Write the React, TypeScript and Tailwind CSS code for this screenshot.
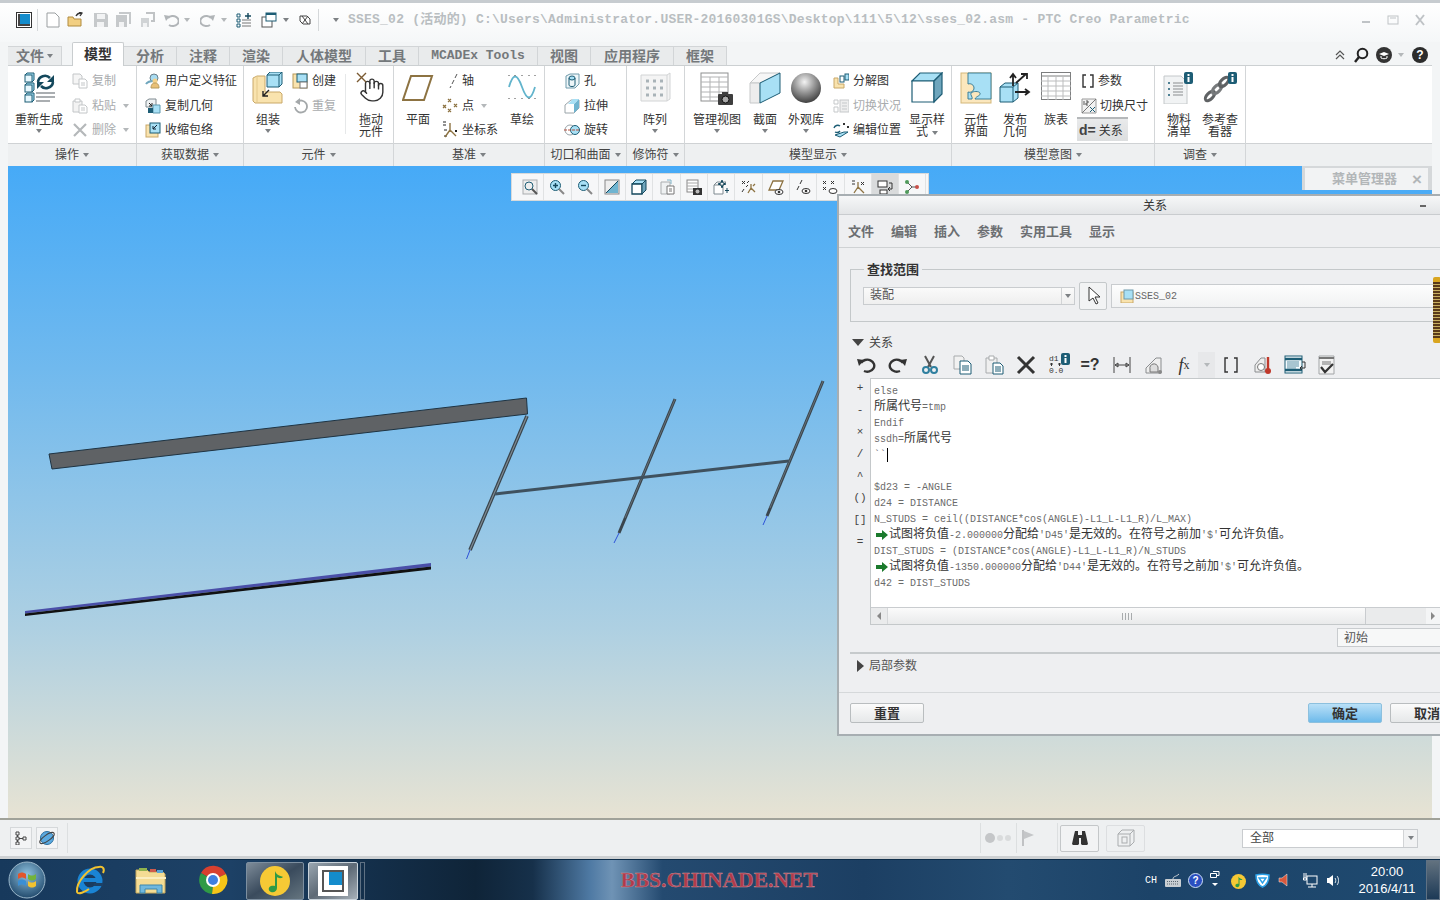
import React from "react";
import { Hand } from "lucide-react";

const CJK = "font-['Liberation_Sans','Noto_Sans_CJK_SC',sans-serif]";
const MONO = "font-['Liberation_Mono','Noto_Sans_CJK_SC',monospace]";

const Ico = ({ s = 16, h, children }: { s?: number; h?: number; children?: React.ReactNode }) => (
  <svg width={s} height={h ?? s} viewBox={`0 0 ${s} ${h ?? s}`} fill="none" className="block shrink-0">
    {children}
  </svg>
);

const Caret = ({ light }: { light?: boolean }) => (
  <span
    className={`inline-block w-0 h-0 border-l-[3.5px] border-r-[3.5px] border-t-[4px] border-l-transparent border-r-transparent ${
      light ? "border-t-[#b4b8ba]" : "border-t-[#7d8184]"
    }`}
  />
);

const Cube = ({ x, y, s = 8 }: { x: number; y: number; s?: number }) => (
  <g stroke="#1d5d75" strokeWidth="1">
    <path d={`M${x} ${y + 2}l2-2h${s - 2}v${s - 2}l-2 2z`} fill="#a8e0f5" />
    <rect x={x} y={y + 2} width={s - 2} height={s - 2} fill="#e7f7fd" />
  </g>
);

const InfoBadge = ({ x, y }: { x: number; y: number }) => (
  <g>
    <rect x={x} y={y} width="9" height="12" rx="2" fill="#1d5d75" />
    <rect x={x + 3.5} y={y + 2} width="2" height="2" fill="#fff" />
    <rect x={x + 3.5} y={y + 5} width="2" height="5" fill="#fff" />
  </g>
);

// big ribbon icons
const RegenIcon = () => (
  <Ico s={32}>
    <Cube x={2} y={1} s={9} />
    <Cube x={2} y={11} s={9} />
    <Cube x={2} y={21} s={9} />
    <path d="M15 10a7 7 0 0 1 12-4" stroke="#14485c" strokeWidth="2.6" />
    <path d="M31 3v7h-7z" fill="#14485c" />
    <path d="M30 10a7 7 0 0 1-12 4" stroke="#14485c" strokeWidth="2.6" />
    <path d="M14 17v-7h7z" fill="#14485c" />
    <path d="M13 21h19M13 25h19M13 29h14" stroke="#8f9498" strokeWidth="1.6" />
  </Ico>
);
const AsmIcon = () => (
  <Ico s={32}>
    <path d="M1 6l4-2h8v16h15l2 2v9H3l-2-2z" fill="#f9e3ae" stroke="#c9a868" />
    <path d="M5 4v26" stroke="#e3c88a" />
    <path d="M15 3l3-3h12v12l-3 3H15z" fill="#a8e0f5" stroke="#1d5d75" />
    <path d="M15 3h12v12M27 3l3-3" stroke="#1d5d75" />
    <path d="M17 18l-6 6m0-5v5h5" stroke="#222" strokeWidth="1.4" />
  </Ico>
);
const DragIcon = () => (
  <div className="relative w-[30px] h-[32px]">
    <div className="absolute left-[3px] top-[5px]">
      <Hand size={26} strokeWidth={1.3} color="#333" />
    </div>
    <div className="absolute left-0 top-0">
      <Ico s={12}>
        <path d="M1 1l9 9M10 1l-9 9" stroke="#7a5a32" strokeWidth="1.4" />
      </Ico>
    </div>
  </div>
);
const PlaneIcon = () => (
  <Ico s={32}>
    <path d="M9 4h21l-8 24H1z" stroke="#8d7342" strokeWidth="2" fill="#fff" />
  </Ico>
);
const SketchIcon = () => (
  <Ico s={30} h={30}>
    <path d="M2 15c4-14 8-14 13 0s9 14 13 0" stroke="#62b4cc" strokeWidth="1.8" />
    <path d="M2 3v1M8 3v1M15 3v1M22 3v1M28 3v1M2 26v1M8 26v1M15 26v1M22 26v1M28 26v1" stroke="#444" />
  </Ico>
);
const PatternIcon = () => (
  <Ico s={32}>
    <path d="M2 3h26l3-2v26l-3 2H2z" fill="#f4f4f4" stroke="#d2d4d5" />
    <path d="M28 3v26" stroke="#d2d4d5" />
    <path
      d="M7 9h3M14 9h3M21 9h3M7 16h3M14 16h3M21 16h3M7 23h3M14 23h3M21 23h3"
      stroke="#a9b3b8"
      strokeWidth="3"
    />
  </Ico>
);
const ViewMgrIcon = () => (
  <Ico s={34} h={34}>
    <rect x="1" y="1" width="27" height="28" fill="#fff" stroke="#8e8f90" />
    <path d="M1 5h27M1 10h27M1 15h27M1 20h27M1 25h27M10 5v24M19 5v24" stroke="#b2b3b4" />
    <rect x="18" y="22" width="15" height="11" rx="1" fill="#3e3e3e" />
    <rect x="22" y="20" width="6" height="3" fill="#3e3e3e" />
    <circle cx="25.5" cy="27.5" r="3.5" fill="#aaa" stroke="#111" />
  </Ico>
);
const SectionIcon = () => (
  <Ico s={32}>
    <path d="M1 11L11 1h20L11 11z" fill="#f6f6f6" stroke="#c6c8c9" />
    <path d="M1 11h10v20H1z" fill="#ededed" stroke="#c6c8c9" />
    <path d="M11 11L31 1v20L11 31z" fill="#a8e0f5" stroke="#1d5d75" />
  </Ico>
);
const SphereIcon = () => (
  <Ico s={32}>
    <defs>
      <radialGradient id="sph" cx="0.45" cy="0.3" r="0.75">
        <stop offset="0" stopColor="#f4f4f4" />
        <stop offset="0.45" stopColor="#9a9a9a" />
        <stop offset="1" stopColor="#333" />
      </radialGradient>
    </defs>
    <circle cx="16" cy="16" r="15" fill="url(#sph)" />
  </Ico>
);
const StyleIcon = () => (
  <Ico s={32}>
    <path d="M1 9l8-8h22L23 9z" fill="#a8e0f5" stroke="#1d5d75" strokeWidth="1.2" />
    <path d="M1 9h22v21H1z" fill="#fff" stroke="#1d5d75" strokeWidth="1.2" />
    <path d="M23 9l8-8v21l-8 8z" fill="#6fa6bd" stroke="#1d5d75" strokeWidth="1.2" />
  </Ico>
);
const CompIfaceIcon = () => (
  <Ico s={32}>
    <rect x="1" y="1" width="30" height="30" fill="#fbe7bd" stroke="#d3b77a" />
    <path
      d="M8 1h23v26H15c1-3 6-3 5-6-1-2-7-2-9 0-1 2 2 4 1 6H8v-7c3 1 6-1 6-4s-3-5-6-4z"
      fill="#a8e0f5"
      stroke="#3d7f97"
    />
  </Ico>
);
const PublishIcon = () => (
  <Ico s={32}>
    <path d="M1 15l5-4h13v15l-5 4H1z" fill="#a8e0f5" stroke="#1d5d75" />
    <path d="M14 15H1M14 15v15M14 15l5-4" stroke="#1d5d75" />
    <path d="M16 20h13M26 17l4 3-4 3M14 14V3M11 6l3-4 3 4M17 11l10-9M22 2h6v5" stroke="#222" strokeWidth="1.8" />
  </Ico>
);
const FamilyIcon = () => (
  <Ico s={30} h={28}>
    <rect x="0.5" y="0.5" width="29" height="27" fill="#fff" stroke="#7d7e7f" />
    <path d="M0 4h30" stroke="#7d7e7f" />
    <path d="M0 9h30M0 14h30M0 19h30M0 24h30M7 4v24M15 4v24M22 4v24" stroke="#bcbdbe" />
  </Ico>
);
const BomIcon = () => (
  <Ico s={32}>
    <path d="M1 4h17l6 6v22H1z" fill="#f1f3f4" stroke="#c4c8ca" />
    <path d="M5 11h2M5 17h2M5 23h2" stroke="#1d5d75" strokeWidth="1.6" />
    <path d="M10 11h10M10 14h10M10 17h10M10 20h10M10 23h10" stroke="#8a8d8f" />
    <InfoBadge x={21} y={0} />
  </Ico>
);
const RefIcon = () => (
  <Ico s={36} h={32}>
    <ellipse cx="8" cy="24" rx="6" ry="3" transform="rotate(-45 8 24)" stroke="#5f6264" strokeWidth="3" />
    <ellipse cx="15" cy="17" rx="6" ry="3" transform="rotate(-45 15 17)" stroke="#777a7c" strokeWidth="3" />
    <ellipse cx="22" cy="10" rx="6" ry="3" transform="rotate(-45 22 10)" stroke="#5f6264" strokeWidth="3" />
    <InfoBadge x={26} y={0} />
  </Ico>
);

// small ribbon icons
const CopyIcon = ({ c = "#c3c6c8", f = "#f5f5f5" }: { c?: string; f?: string }) => (
  <Ico>
    <path d="M1 1h7l2 2v8H1z" fill={f} stroke={c} />
    <path d="M7 6h6l2 2v7H7z" fill="#fff" stroke={c} />
    <path d="M9 10h4M9 12h4" stroke={c} />
  </Ico>
);
const PasteIcon = ({ c = "#c3c6c8" }: { c?: string }) => (
  <Ico>
    <path d="M1 3h9v11H1z" fill="#f3f3f3" stroke={c} />
    <path d="M3 1h5v3H3z" fill="#fff" stroke={c} />
    <path d="M7 7h6l2 2v6H7z" fill="#fff" stroke={c} />
    <path d="M9 10h4M9 12h4" stroke={c} />
  </Ico>
);
const XIcon = () => (
  <Ico>
    <path d="M2 2l12 12M14 2L2 14" stroke="#b5b8ba" strokeWidth="2.2" />
  </Ico>
);
const UdfIcon = () => (
  <Ico>
    <circle cx="9" cy="5" r="4" fill="#a8dcf2" stroke="#6b7f8a" />
    <path d="M1 11c2-3 5-3 8-3" stroke="#6fa6bd" strokeWidth="2" />
    <circle cx="10" cy="8" r="2.5" fill="#f4d28c" />
    <path d="M6 15c0-4 2-5 4-5s4 1 4 5z" fill="#e9c077" stroke="#b59a5c" />
  </Ico>
);
const CopyGeomIcon = () => (
  <Ico>
    <path d="M1 3l3-2h7v8H1z" fill="#eef1f2" stroke="#7e8a90" />
    <path d="M4 5l3 3m0-3v3H4" stroke="#222" />
    <path d="M8 7h7v8H8z" fill="#a8e0f5" stroke="#5d97ad" />
    <path d="M8 10h-5v5h5" fill="#1d5d75" />
  </Ico>
);
const ShrinkIcon = () => (
  <Ico>
    <rect x="1" y="3" width="12" height="12" fill="#f9e3ae" stroke="#c9a868" />
    <rect x="5" y="1" width="10" height="10" fill="#a8e0f5" stroke="#1d5d75" />
    <path d="M12 3L8 7m0-3v3h3" stroke="#123" />
  </Ico>
);
const CreateIcon = () => (
  <Ico>
    <rect x="1" y="1" width="14" height="14" fill="#f9e3ae" stroke="#b89a5a" />
    <rect x="5" y="1" width="10" height="8" fill="#a8e0f5" stroke="#1d5d75" />
    <rect x="8" y="9" width="7" height="6" fill="#fff" stroke="#777" />
  </Ico>
);
const RepeatIcon = () => (
  <Ico>
    <path d="M5 4a6 6 0 1 1-2 5" stroke="#a4a8aa" strokeWidth="1.8" />
    <path d="M8 0v7L3 4z" fill="#a4a8aa" />
  </Ico>
);
const AxisIcon = () => (
  <Ico>
    <path d="M15 1l-2 4M12 7l-2 4M9 13l-1 2" stroke="#555" />
  </Ico>
);
const PointIcon = () => (
  <Ico>
    <path
      d="M6 1l3 3M9 1L6 4M12 6l3 3M15 6l-3 3M1 7l3 3M4 7l-3 3M6 11l3 3M9 11l-3 3"
      stroke="#8d7342"
      strokeWidth="1.2"
    />
  </Ico>
);
const CsysIcon = () => (
  <Ico s={18}>
    <path d="M2 1h3M2 4h3M3 9h3M3 15h3" stroke="#222" />
    <path d="M9 2v9M9 9l-5 7M9 9l6 6" stroke="#8d7342" strokeWidth="1.4" />
    <path d="M14 9l2 2M16 9l-2 2" stroke="#222" />
  </Ico>
);
const HoleIcon = () => (
  <Ico>
    <path d="M2 3l4-2h9v10l-4 4H2z" fill="#eef6f9" stroke="#6f9aab" />
    <ellipse cx="8" cy="5" rx="3" ry="2" fill="#a8e0f5" stroke="#1d5d75" />
    <path d="M5 5v7c0 2 6 2 6 0V5" stroke="#1d5d75" />
  </Ico>
);
const ExtrudeIcon = () => (
  <Ico>
    <path d="M1 7l6-5h8v8l-5 5H1z" fill="#fff" stroke="#9aa4a9" />
    <path d="M10 6l5-5v9l-5 5z" fill="#6fb4d0" />
    <path d="M4 6l5-5h6l-5 5z" fill="#a8e0f5" />
  </Ico>
);
const RevolveIcon = () => (
  <Ico>
    <circle cx="6" cy="8" r="5" stroke="#9aa4a9" fill="#fff" />
    <circle cx="11" cy="8" r="4.5" fill="#a8e0f5" stroke="#1d5d75" />
    <path d="M0 8h16" stroke="#b2503f" strokeDasharray="3 1" />
  </Ico>
);
const ExplodeIcon = () => (
  <Ico>
    <path d="M1 5h4v6h6v4H1z" fill="#f9e3ae" stroke="#c9a868" />
    <rect x="7" y="3" width="4" height="6" fill="#fff" stroke="#1d5d75" />
    <rect x="12" y="1" width="4" height="6" fill="#a8e0f5" stroke="#1d5d75" />
  </Ico>
);
const ToggleStateIcon = () => (
  <Ico>
    <path d="M1 2h4v4H1zM1 9h4v5H1z" stroke="#c5c8ca" />
    <rect x="7" y="2" width="9" height="12" fill="#eee" stroke="#c5c8ca" />
    <path d="M9 5h5M9 8h5M9 11h5" stroke="#c5c8ca" />
  </Ico>
);
const EditPosIcon = () => (
  <Ico>
    <path d="M1 6a4 4 0 0 1 6-2M7 9a4 4 0 0 1-5 1" stroke="#1d5d75" strokeWidth="1.4" />
    <path d="M10 1l2 2M12 1l-2 2M14 4l2 2M16 4l-2 2" stroke="#333" />
    <path d="M2 13l9-3h4l-8 5z" fill="#a8e0f5" stroke="#1d5d75" />
  </Ico>
);
const BracesIcon = () => (
  <Ico s={14}>
    <path d="M5 1H2v12h3M9 1h3v12H9" stroke="#333" strokeWidth="1.4" />
  </Ico>
);
const SwitchDimIcon = () => (
  <Ico>
    <path d="M1 1h14v14H1z" fill="#f2f2f2" stroke="#9a9a9a" />
    <path d="M1 15L15 1" stroke="#777" />
    <path d="M3 3v4M5 3h2v2H5v2h2" stroke="#333" strokeWidth="0.8" />
    <path d="M9 9l5 5M14 9l-5 5" stroke="#1d5d75" />
  </Ico>
);

const Big = ({
  className = "",
  label,
  arrow,
  inlineArrow,
  children,
}: {
  className?: string;
  label: string[];
  arrow?: boolean;
  inlineArrow?: boolean;
  children: React.ReactNode;
}) => (
  <div className={`flex flex-col items-center shrink-0 ${className}`}>
    <div className="h-[48px] pt-[6px] flex justify-center">{children}</div>
    <div className="text-[12px] leading-[12px] text-center text-[#333] whitespace-nowrap">
      {label.map((l, i) => (
        <div key={l}>
          {l}
          {inlineArrow && i === label.length - 1 && (
            <span className="ml-[4px] align-middle inline-flex">
              <Caret />
            </span>
          )}
        </div>
      ))}
    </div>
    {arrow && (
      <div className="mt-[3px] flex">
        <Caret />
      </div>
    )}
  </div>
);

const Row = ({
  icon,
  label,
  off,
  arrow,
  pad = 4,
}: {
  icon: React.ReactNode;
  label: string;
  off?: boolean;
  arrow?: boolean;
  pad?: number;
}) => (
  <div className={`h-[24.5px] flex items-center whitespace-nowrap text-[12px] ${off ? "text-[#a9acae]" : "text-[#333]"}`}>
    {icon}
    <span className={pad === 3 ? "ml-[3px]" : "ml-[4px]"}>{label}</span>
    {arrow && (
      <span className="ml-[7px] flex">
        <Caret light />
      </span>
    )}
  </div>
);

const Group = ({
  w,
  label,
  arrow = true,
  children,
}: {
  w: string;
  label?: string;
  arrow?: boolean;
  children?: React.ReactNode;
}) => (
  <div className={`flex flex-col shrink-0 border-r border-[#d3d6d8] ${w}`}>
    <div className="h-[77px] flex">{children}</div>
    <div className="h-[23px] bg-[#eef0f1] border-t border-[#cfd2d4] flex items-center justify-center gap-[4px] text-[12px] text-[#444]">
      {label}
      {label && arrow && <Caret />}
    </div>
  </div>
);

const Tab = ({ w, children, mono }: { w: string; children: React.ReactNode; mono?: boolean }) => (
  <div
    className={`h-[19px] flex items-center justify-center bg-[#e9ebec] border-t border-r border-[#d2d5d7] font-bold text-[#74787b] ${
      mono ? `${MONO} text-[13px]` : "text-[14px]"
    } ${w}`}
  >
    {children}
  </div>
);

const Op = ({ children }: { children: string }) => (
  <div className="h-[22px] flex items-center justify-center text-[11px] text-[#444]">{children}</div>
);

const Code = ({ text, arrow }: { text?: string; arrow?: boolean }) => (
  <div className="h-[16px] flex items-center whitespace-pre">
    {arrow && (
      <span className="mr-[1px] ml-[2px]">
        <Ico s={12}>
          <path d="M0 4h6V1l6 5-6 5V8H0z" fill="#1b7a2c" />
        </Ico>
      </span>
    )}
    {(text ?? "").split(/([\u4e00-\u9fff\u3000-\u303f]+)/).map((t, i) =>
      i % 2 ? (
        <span key={i} className="text-[12px] text-[#333]">
          {t}
        </span>
      ) : (
        <span key={i} className="text-[10px] text-[#6b6b6b]">
          {t}
        </span>
      ),
    )}
  </div>
);

const Tool = ({ active, children }: { active?: boolean; children: React.ReactNode }) => (
  <div
    className={`w-[27.3px] h-full flex items-center justify-center border-r border-[#e0e2e3] ${
      active ? "bg-[#d9dbdc]" : ""
    }`}
  >
    {children}
  </div>
);

const Btn = ({ w, blue, children }: { w: string; blue?: boolean; children: string }) => (
  <div
    className={`h-[20px] pt-[1px] flex items-center justify-center rounded-[2px] border text-[13px] font-bold text-[#333] ${w} ${
      blue
        ? "border-[#8cc0de] bg-gradient-to-b from-[#b9e0f7] to-[#6dbaea]"
        : "border-[#b9bdbf] bg-gradient-to-b from-[#fbfbfb] to-[#e6e8e9]"
    }`}
  >
    {children}
  </div>
);

const Sep = ({ className }: { className: string }) => <div className={`w-px h-[30px] bg-[#dcdfe0] ${className}`} />;

const Dialog = () => (
  <div className="absolute left-[837px] top-[194px] w-[636px] h-[542px] flex flex-col border-2 border-[#a7aeb2] bg-[#eeeff1]">
    <div className="h-[19px] pt-[1px] relative shrink-0 flex items-center justify-center text-[12px] text-[#333] bg-gradient-to-b from-[#f6f7f8] to-[#e3e5e7] border-b border-[#c9cccf]">
      关系
      <div className="absolute left-[581px] top-[9px] w-[6px] h-[2px] bg-[#666]" />
    </div>
    <div className="h-[33px] pt-[2px] shrink-0 flex items-center gap-[17px] pl-[9px] text-[13px] font-bold text-[#6b6e71] border-b border-[#cfd2d4]">
      <span>文件</span>
      <span>编辑</span>
      <span>插入</span>
      <span>参数</span>
      <span>实用工具</span>
      <span>显示</span>
    </div>

    <fieldset className="mx-[11px] mt-[13px] h-[61px] shrink-0 border border-[#c4c8ca] px-[12px]">
      <legend className="ml-[1px] px-[3px] h-[16px] leading-[17px] text-[13px] font-bold text-[#333]">查找范围</legend>
      <div className="mt-[5px] h-[28px] flex items-center">
        <div className="w-[212px] h-[18px] flex border border-[#c9cccf] bg-gradient-to-b from-[#fafafa] to-[#efefef]">
          <span className="flex-1 pl-[6px] text-[12px] leading-[15px] text-[#555]">装配</span>
          <span className="w-[13px] border-l border-[#d2d4d6] flex items-center justify-center">
            <Caret />
          </span>
        </div>
        <div className="ml-[4px] w-[28px] h-[28px] flex items-center justify-center rounded-[2px] border border-[#c4c8ca] bg-[#f2f3f4]">
          <Ico s={20}>
            <path d="M6 1v14l4-3 3 6 2-1-3-6h5z" fill="#fff" stroke="#333" />
          </Ico>
        </div>
        <div className="ml-[4px] flex-1 h-[24px] flex items-center pl-[8px] border border-[#c9cccf] bg-gradient-to-b from-[#fdfdfd] to-[#f1f2f3] text-[10px] text-[#666]">
          <Ico s={14}>
            <rect x="1" y="3" width="12" height="11" fill="#f9e3ae" stroke="#c9a868" />
            <rect x="4" y="1" width="9" height="9" fill="#a8e0f5" stroke="#6f9aab" />
          </Ico>
          <span className={`${MONO} ml-[1px]`}>SSES_02</span>
        </div>
      </div>
    </fieldset>

    <div className="mt-[12px] h-[16px] pt-[1px] shrink-0 flex items-center pl-[13px] text-[12px] text-[#444]">
      <span className="w-0 h-0 border-l-[6px] border-r-[6px] border-t-[7px] border-l-transparent border-r-transparent border-t-[#444]" />
      <span className="ml-[5px]">关系</span>
    </div>

    <div className="mt-[4px] h-[22px] shrink-0 ml-[11px] flex items-center">
      <div className="w-[32px] flex justify-center">
        <Ico s={20}>
          <path d="M5 8a7 6 0 1 1 3 8" stroke="#333" strokeWidth="2.4" />
          <path d="M1 4l7 1-5 6z" fill="#333" />
        </Ico>
      </div>
      <div className="w-[32px] flex justify-center">
        <Ico s={20}>
          <path d="M15 8a7 6 0 1 0-3 8" stroke="#333" strokeWidth="2.4" />
          <path d="M19 4l-7 1 5 6z" fill="#333" />
        </Ico>
      </div>
      <div className="w-[32px] flex justify-center">
        <Ico s={20}>
          <path d="M5 1l6 11M14 1L8 12" stroke="#555" strokeWidth="2" />
          <circle cx="6" cy="15" r="3" stroke="#2f7f9f" strokeWidth="2" />
          <circle cx="14" cy="15" r="3" stroke="#2f7f9f" strokeWidth="2" />
        </Ico>
      </div>
      <div className="w-[32px] flex justify-center">
        <Ico s={20}>
          <path d="M2 1h8l2 2v11H2z" fill="#f1f1f1" stroke="#a8abad" />
          <path d="M8 6h8l3 3v10H8z" fill="#fff" stroke="#1d5d75" />
          <path d="M10 11h7M10 13h7M10 15h7" stroke="#1d5d75" />
        </Ico>
      </div>
      <div className="w-[32px] flex justify-center">
        <Ico s={20}>
          <path d="M2 3h11v15H2z" fill="#efefef" stroke="#a8abad" />
          <path d="M5 1h5v4H5z" fill="#fff" stroke="#a8abad" />
          <path d="M9 8h7l3 3v8H9z" fill="#fff" stroke="#1d5d75" />
          <path d="M11 12h6M11 14h6M11 16h6" stroke="#1d5d75" />
        </Ico>
      </div>
      <div className="w-[32px] flex justify-center">
        <Ico s={20}>
          <path d="M2 2l16 16M18 2L2 18" stroke="#333" strokeWidth="3" />
        </Ico>
      </div>
      <div className="w-[32px] flex justify-center">
        <Ico s={23} h={24}>
          <text x="2" y="8" fontSize="8" fill="#333" fontFamily="Liberation Mono">d1</text>
          <path d="M3 11h3M11 11h3M4.5 10v3M12.5 10v3" stroke="#333" />
          <text x="2" y="20" fontSize="8" fill="#333" fontFamily="Liberation Mono">0.0</text>
          <InfoBadge x={14} y={0} />
        </Ico>
      </div>
      <div className="w-[32px] flex justify-center text-[16px] font-bold text-[#333]">=?</div>
      <div className="w-[32px] flex justify-center">
        <Ico s={20}>
          <path d="M2 2v16M18 2v16M3 10h14M3 10l3-2v4zM17 10l-3-2v4z" stroke="#444" />
        </Ico>
      </div>
      <div className="w-[32px] flex justify-center">
        <Ico s={20}>
          <path d="M2 18h15V3h-5L2 13z" fill="#eee" stroke="#8a8d8f" />
          <path d="M6 14a4 4 0 0 1 8-2v5H6z" fill="#ddd" stroke="#777" />
          <circle cx="16" cy="17" r="2" fill="#888" />
        </Ico>
      </div>
      <div className="w-[28px] flex justify-center font-['Liberation_Serif',serif] italic text-[18px] text-[#333] leading-[22px]">
        f<span className="text-[12px] not-italic">x</span>
      </div>
      <div className="w-[17px] h-[26px] -my-[2px] flex items-center justify-center bg-[#e7e8ea]">
        <Caret light />
      </div>
      <div className="w-[32px] flex justify-center">
        <Ico s={16}>
          <path d="M5 1H2v14h3M11 1h3v14h-3" stroke="#333" strokeWidth="1.4" />
        </Ico>
      </div>
      <div className="w-[32px] flex justify-center">
        <Ico s={20}>
          <path d="M2 17h10V3H8L2 10z" fill="#eee" stroke="#8a8d8f" />
          <circle cx="8" cy="12" r="3.5" fill="#fff" stroke="#777" />
          <path d="M15 2v12" stroke="#c0392b" strokeWidth="2.4" />
          <circle cx="15" cy="16" r="3" fill="#c0392b" />
        </Ico>
      </div>
      <div className="w-[32px] flex justify-center">
        <Ico s={22}>
          <rect x="1" y="2" width="17" height="17" fill="#f4fbfe" stroke="#1d5d75" />
          <path d="M1 5h17M1 16h17" stroke="#1d5d75" strokeWidth="2.5" />
          <path d="M3 8h12M3 10h12M3 12h12M3 14h9" stroke="#5d8fa3" />
          <path d="M18 8h3v6h-5m2-2l-2 2 2 2" stroke="#333" />
        </Ico>
      </div>
      <div className="w-[32px] flex justify-center">
        <Ico s={20}>
          <path d="M2 1h15v18H2z" fill="#f2f2f2" stroke="#a2a5a7" />
          <path d="M2 3h15" stroke="#777" strokeWidth="2" />
          <path d="M5 7h9M5 9h9" stroke="#777" />
          <path d="M4 12l4 5 8-8" stroke="#333" strokeWidth="2.2" />
        </Ico>
      </div>
    </div>

    <div className="mt-[2px] ml-[11px] h-[247px] shrink-0 flex">
      <div className="w-[20px] -mt-[1px] font-['Liberation_Mono',monospace]">
        <Op>+</Op>
        <Op>-</Op>
        <Op>×</Op>
        <Op>/</Op>
        <Op>^</Op>
        <Op>()</Op>
        <Op>[]</Op>
        <Op>=</Op>
      </div>
      <div className="flex-1 flex flex-col border border-[#c4c8ca] bg-white">
        <div className={`flex-1 pt-[4px] pl-[3px] ${MONO}`}>
          <Code text="else" />
          <Code text="所属代号=tmp" />
          <Code text="Endif" />
          <Code text="ssdh=所属代号" />
          <div className="h-[16px] flex items-center text-[10px] text-[#6b6b6b]">
            ``
            <span className="ml-[1px] w-px h-[14px] bg-black" />
          </div>
          <Code />
          <Code text="$d23 = -ANGLE" />
          <Code text="d24 = DISTANCE" />
          <Code text="N_STUDS = ceil((DISTANCE*cos(ANGLE)-L1_L-L1_R)/L_MAX)" />
          <Code arrow text="试图将负值-2.000000分配给'D45'是无效的。在符号之前加'$'可允许负值。" />
          <Code text="DIST_STUDS = (DISTANCE*cos(ANGLE)-L1_L-L1_R)/N_STUDS" />
          <Code arrow text="试图将负值-1350.000000分配给'D44'是无效的。在符号之前加'$'可允许负值。" />
          <Code text="d42 = DIST_STUDS" />
        </div>
        <div className="h-[17px] shrink-0 flex bg-[#eaebec] border-t border-[#c9cccf]">
          <div className="w-[17px] flex items-center justify-center border-r border-[#d6d8da]">
            <span className="w-0 h-0 border-t-[4px] border-b-[4px] border-r-[4px] border-t-transparent border-b-transparent border-r-[#888]" />
          </div>
          <div className="w-[478px] flex items-center justify-center gap-[2px] border-r border-[#c9cccf] bg-gradient-to-b from-[#fbfbfb] to-[#e9eaeb]">
            <span className="w-px h-[7px] bg-[#a8abad]" />
            <span className="w-px h-[7px] bg-[#a8abad]" />
            <span className="w-px h-[7px] bg-[#a8abad]" />
            <span className="w-px h-[7px] bg-[#a8abad]" />
          </div>
          <div className="w-[60px]" />
          <div className="w-[14px] flex items-center justify-center bg-[#f4f5f6]">
            <span className="w-0 h-0 border-t-[4px] border-b-[4px] border-l-[4px] border-t-transparent border-b-transparent border-l-[#888]" />
          </div>
        </div>
      </div>
    </div>

    <div className="mt-[3px] ml-[498px] h-[19px] shrink-0 flex items-center pl-[6px] border border-[#c9cccf] bg-[#f7f8f8] text-[12px] text-[#555]">
      初始
    </div>
    <div className="mt-[5px] ml-[11px] h-[2px] shrink-0 bg-[#c6cacc]" />
    <div className="mt-[4px] h-[16px] shrink-0 flex items-center pl-[18px] text-[12px] text-[#555]">
      <span className="w-0 h-0 border-t-[6px] border-b-[6px] border-l-[7px] border-t-transparent border-b-transparent border-l-[#444]" />
      <span className="ml-[5px]">局部参数</span>
    </div>
    <div className="mt-[18px] h-px shrink-0 bg-[#d5d8da]" />
    <div className="pt-[10px] pl-[11px] flex">
      <Btn w="w-[74px]">重置</Btn>
      <Btn w="w-[74px] ml-[384px]" blue>
        确定
      </Btn>
      <Btn w="w-[74px] ml-[8px]">取消</Btn>
    </div>
  </div>
);

const MiniToolbar = () => (
  <div className="absolute left-[503px] top-[7px] w-[418px] h-[28px] flex pl-[5px] border border-[#d7dadb] bg-[#f6f7f8]">
    <Tool>
      <Ico>
        <rect x="1" y="1" width="14" height="14" fill="#eee" stroke="#a9adaf" />
        <circle cx="7" cy="7" r="4" stroke="#1d5d75" />
        <path d="M10 10l5 5" stroke="#555" strokeWidth="2" />
      </Ico>
    </Tool>
    <Tool>
      <Ico>
        <circle cx="6.5" cy="6.5" r="5" fill="#a8e0f5" stroke="#1d5d75" />
        <path d="M4 6.5h5M6.5 4v5" stroke="#14485c" strokeWidth="1.4" />
        <path d="M10 10l5 5" stroke="#888" strokeWidth="2" />
      </Ico>
    </Tool>
    <Tool>
      <Ico>
        <circle cx="6.5" cy="6.5" r="5" fill="#a8e0f5" stroke="#1d5d75" />
        <path d="M4 6.5h5" stroke="#14485c" strokeWidth="1.4" />
        <path d="M10 10l5 5" stroke="#888" strokeWidth="2" />
      </Ico>
    </Tool>
    <Tool>
      <Ico>
        <rect x="1" y="1" width="14" height="14" fill="#eee" stroke="#888" />
        <path d="M2 14L14 2v12z" fill="#6fb4d0" />
        <path d="M2 14L14 2" stroke="#14485c" />
      </Ico>
    </Tool>
    <Tool>
      <Ico>
        <path d="M1 5l4-4h10L11 5z" fill="#a8e0f5" stroke="#14485c" />
        <path d="M1 5h10v10H1z" fill="#fff" stroke="#14485c" strokeWidth="1.3" />
        <path d="M11 5l4-4v10l-4 4z" fill="#6fa6bd" stroke="#14485c" />
      </Ico>
    </Tool>
    <Tool>
      <Ico>
        <path d="M2 3h9v12H2z" fill="#eef1f2" stroke="#a9adaf" />
        <path d="M8 1h4v4" stroke="#7fb4c8" />
        <path d="M8 7h7v8H8z" fill="#fff" stroke="#777" />
        <path d="M10 10h3M10 12h3" stroke="#777" />
      </Ico>
    </Tool>
    <Tool>
      <Ico>
        <rect x="1" y="1" width="11" height="12" fill="#fff" stroke="#888" />
        <path d="M1 4h11M1 7h11M1 10h11" stroke="#aaa" />
        <rect x="7" y="9" width="9" height="7" fill="#333" />
        <circle cx="11.5" cy="12.5" r="2" fill="#bbb" />
      </Ico>
    </Tool>
    <Tool>
      <Ico>
        <path d="M1 6h9v9H1z" fill="#fff" stroke="#7e8a90" />
        <path d="M10 6l3-3M1 6l3-3h9" stroke="#7e8a90" />
        <path d="M9 1l1 3 3 1-3 1-1 3-1-3-3-1 3-1zM14 9v5M12 11.5h4" stroke="#14485c" />
      </Ico>
    </Tool>
    <Tool>
      <Ico>
        <path d="M1 2l3 3M4 2L1 5M6 4l2-2M1 13l2-3M5 8l2-2" stroke="#333" />
        <path d="M10 5v6M10 9l-3 5M10 9l4 4M14 5l-2 2" stroke="#8d7342" strokeWidth="1.3" />
      </Ico>
    </Tool>
    <Tool>
      <Ico>
        <path d="M5 2h10l-4 9H1z" fill="#fff" stroke="#8d7342" strokeWidth="1.3" />
        <ellipse cx="11" cy="13" rx="4" ry="2.5" fill="#fff" stroke="#333" />
        <circle cx="11" cy="13" r="1.3" fill="#333" />
      </Ico>
    </Tool>
    <Tool>
      <Ico>
        <path d="M7 1L5 5M4 7L2 11" stroke="#333" />
        <ellipse cx="11" cy="12" rx="4" ry="2.5" fill="#fff" stroke="#333" />
        <circle cx="11" cy="12" r="1.3" fill="#333" />
      </Ico>
    </Tool>
    <Tool>
      <Ico>
        <path d="M1 2l3 3M4 2L1 5M9 2l3 3M12 2L9 5M1 8l3 3M4 8l-3 3" stroke="#333" />
        <ellipse cx="11" cy="12" rx="4" ry="2.5" fill="#fff" stroke="#333" />
      </Ico>
    </Tool>
    <Tool>
      <Ico>
        <path d="M8 3v7M8 8l-4 6M8 8l6 6" stroke="#8d7342" strokeWidth="1.3" />
        <path d="M2 2h3M2 5h3M11 3l3 3M14 3l-3 3" stroke="#333" />
      </Ico>
    </Tool>
    <Tool active>
      <Ico>
        <rect x="1" y="2" width="9" height="6" fill="#fff" stroke="#333" />
        <path d="M12 4h3v6h-3M13 8l-2 2 2 2" stroke="#333" />
        <rect x="3" y="11" width="7" height="4" fill="#fff" stroke="#333" />
      </Ico>
    </Tool>
    <Tool>
      <Ico>
        <path d="M3 3l5 5-5 5M8 8h6" stroke="#555" />
        <circle cx="3" cy="3" r="2" fill="#4e9a5a" />
        <circle cx="3" cy="13" r="2" fill="#4e9a5a" />
        <circle cx="13" cy="8" r="2" fill="#c9504a" />
      </Ico>
    </Tool>
  </div>
);

const Model = () => (
  <svg viewBox="8 166 1424 652" className="absolute inset-0 w-full h-full" fill="none">
    <path d="M49 454L526.5 398l1 16L52 469z" fill="#5f6265" stroke="#1e3342" />
    <path d="M25 611L431 563v3.500L25 613.500z" fill="#4a4fa8" />
    <path d="M25 613.500L431 566.500v3L25 616z" fill="#111" />
    <path d="M527 416L470 550" stroke="#39444c" strokeWidth="3.6" />
    <path d="M527 416L470 550" stroke="#7e8b93" strokeWidth="1.2" />
    <path d="M470 550l-3.500 9" stroke="#2d52d8" />
    <path d="M675 399L619 533" stroke="#3a454d" strokeWidth="3" />
    <path d="M675 399L625 518" stroke="#6e7b83" strokeWidth="0.8" />
    <path d="M619 533l-5 10" stroke="#2d52d8" />
    <path d="M823 381L767 516" stroke="#3a454d" strokeWidth="3" />
    <path d="M823 381L770 508" stroke="#6e7b83" strokeWidth="0.8" />
    <path d="M767 516l-4 9" stroke="#2d52d8" />
    <path d="M495 494L789 461" stroke="#3f515e" strokeWidth="3" />
  </svg>
);

const TaskButton = ({ w, active, children }: { w: string; active?: boolean; children: React.ReactNode }) => (
  <div
    className={`h-[38px] mt-[2px] flex items-center justify-center rounded-[2px] border ${w} ${
      active
        ? "border-[#c8d2da] bg-gradient-to-br from-[#9aa6b0] via-[#5e6a76] to-[#a7b1b9]"
        : "border-[#7d8fa0] bg-gradient-to-br from-[#7e8c99] via-[#3a4b5d] to-[#65757f]"
    }`}
  >
    {children}
  </div>
);

const QqMusic = ({ s = 30 }: { s?: number }) => (
  <svg width={s} height={s} viewBox="0 0 30 30" className="block shrink-0">
    <circle cx="15" cy="15" r="15" fill="#f6c935" />
    <path d="M15 5c1 4 6 5 8 6-2 2-5 1-6 0v11c0 3-3 5-6 4s-3-5 0-6c1-.5 3-.5 4 0z" fill="#2f9a46" />
  </svg>
);

const Taskbar = () => (
  <div className="h-[41px] shrink-0 flex text-white border-t border-[#0d2c49] bg-[linear-gradient(90deg,#17395c_0%,#1d4166_16%,#14304c_25%,#0f2438_33%,#16304a_37%,#4f7aa4_41%,#6f93b5_42.5%,#244a70_46%,#1c3f63_60%,#234b70_70%,#1c4368_80%,#1f4a70_100%)]">
    <div className="ml-[8px] mt-[1px]">
      <Ico s={38}>
        <defs>
          <radialGradient id="orb" cx="0.5" cy="0.35" r="0.75">
            <stop offset="0" stopColor="#8fc2e0" />
            <stop offset="1" stopColor="#12395c" />
          </radialGradient>
        </defs>
        <circle cx="19" cy="19" r="18" fill="url(#orb)" stroke="#9cb8cb" />
        <path d="M10 13c3-2 5-2 8 0v5c-3-2-5-2-8 0z" fill="#e2562c" />
        <path d="M20 13c3 2 5 2 8 0v5c-3 2-5 2-8 0z" fill="#73b33b" />
        <path d="M10 20c3-2 5-2 8 0v5c-3-2-5-2-8 0z" fill="#3b8fd4" />
        <path d="M20 20c3 2 5 2 8 0v5c-3 2-5 2-8 0z" fill="#f2c230" />
      </Ico>
    </div>
    <div className="ml-[28px] mt-[4px]">
      <Ico s={32}>
        <circle cx="16" cy="17" r="9.500" stroke="#1a84d4" strokeWidth="6" />
        <path d="M8 16h17" stroke="#1a84d4" strokeWidth="4" />
        <path d="M25 3C15 3 2 18 3 28c1 3 8 0 12-3" stroke="#f2c230" strokeWidth="2" />
        <path d="M25 3c4-1 6 2 4 6" stroke="#f2c230" strokeWidth="2" />
        <rect x="20" y="19" width="9" height="3" fill="#1d4166" />
      </Ico>
    </div>
    <div className="ml-[29px] mt-[5px]">
      <Ico s={32} h={30}>
        <path d="M1 5h11l2 2h14l2 2v19H1z" fill="#f4dc94" stroke="#c6a95e" />
        <path d="M4 3h8v3H4z" fill="#8fb34e" />
        <path d="M15 4h6v3h-6z" fill="#cf5b4d" />
        <path d="M22 5h6v3h-6z" fill="#5ba4d6" />
        <path d="M1 12h30v2H1z" fill="#fbeec0" />
        <path d="M5 28v-8h22v8h-5v-4H10v4z" fill="#6fb8de" stroke="#3d87ad" />
      </Ico>
    </div>
    <div className="ml-[31px] mt-[5px]">
      <Ico s={30}>
        <path d="M15 15L3 8a14 14 0 0 1 25 1z" fill="#d8402f" />
        <path d="M15 15l13-6a14 14 0 0 1-14 20z" fill="#f5c518" />
        <path d="M15 15l-1 14A14 14 0 0 1 3 8z" fill="#2f9a46" />
        <circle cx="15" cy="15" r="7" fill="#fff" />
        <circle cx="15" cy="15" r="5" fill="#3f7fe0" />
      </Ico>
    </div>
    <TaskButton w="ml-[18px] w-[58px]">
      <QqMusic />
    </TaskButton>
    <TaskButton w="ml-[4px] w-[50px]" active>
      <div className="w-[30px] h-[30px] bg-white p-[4px]">
        <div className="w-full h-full border-2 border-[#555] relative">
          <div className="absolute right-0 top-0 w-[13px] h-[13px] bg-[#148ccc]" />
        </div>
      </div>
    </TaskButton>
    <div className="ml-[2px] mt-[2px] h-[38px] w-[5px] border border-[#5f7183]" />
    <div className="ml-[255px] w-[198px] text-center font-['Liberation_Serif',serif] font-bold text-[21.5px] leading-[40px] text-[#b23a4a] [-webkit-text-stroke:0.4px_#c9929a] whitespace-nowrap">
      BBS.CHINADE.NET
    </div>
    <div className="ml-auto flex items-center h-full">
      <span className={`${MONO} text-[10px] mr-[8px]`}>CH</span>
      <div className="mr-[7px]">
        <Ico s={16} h={14}>
          <rect x="0" y="6" width="16" height="8" rx="1" fill="#c9ced2" />
          <path d="M2 8.500h12M2 11h12" stroke="#5a6670" strokeDasharray="1 1" />
          <path d="M8 6c0-3 3-2 6-5" stroke="#c9ced2" />
        </Ico>
      </div>
      <div className="mr-[7px] w-[15px] h-[15px] rounded-full bg-[#2a4fc0] border border-[#cfe0f5] flex items-center justify-center text-[10px] font-bold">
        ?
      </div>
      <div className="mr-[11px] -mt-[3px] flex flex-col items-center gap-[5px]">
        <Ico s={10} h={7}>
          <path d="M3 0.500h6v4H7M0.500 2.500h6v4h-6z" stroke="#fff" />
        </Ico>
        <span className="w-0 h-0 border-l-[3px] border-r-[3px] border-t-[3px] border-l-transparent border-r-transparent border-t-white" />
      </div>
      <div className="mr-[9px] mt-[2px]">
        <QqMusic s={15} />
      </div>
      <div className="mr-[8px]">
        <Ico s={15}>
          <path d="M1 2c4-1 9-1 13 0 0 6-2 10-6.500 12C3 12 1 8 1 2z" fill="#fff" stroke="#2aa0e8" strokeWidth="1.6" />
          <path d="M4 5h7L7.500 10z" stroke="#2aa0e8" strokeWidth="1.4" />
        </Ico>
      </div>
      <div className="mr-[11px]">
        <Ico s={14}>
          <path d="M1 5h3l5-4v12L4 9H1z" fill="#d9583c" stroke="#eee" strokeWidth="0.5" />
        </Ico>
      </div>
      <div className="mr-[8px]">
        <Ico s={15}>
          <rect x="4" y="3" width="10" height="8" stroke="#fff" />
          <path d="M1 0v5M3 0v5M0.500 5h3v2h-3zM9 11v3M5 14h8" stroke="#fff" />
        </Ico>
      </div>
      <div className="mr-[15px]">
        <Ico s={15}>
          <path d="M1 5h2l4-3v11L3 10H1z" fill="#fff" />
          <path d="M9 5c1 1 1 4 0 5M11 3c2 2 2 7 0 9" stroke="#dfe6ec" />
        </Ico>
      </div>
      <div className="w-[62px] flex flex-col items-center text-[13px] leading-[17px] text-white mr-[8px]">
        <span>20:00</span>
        <span>2016/4/11</span>
      </div>
      <div className="w-[14px] h-full border border-[#5f7183] bg-gradient-to-b from-[#62727f] to-[#1d3a56]" />
    </div>
  </div>
);

export default function App() {
  return (
    <div className={`relative w-[1440px] h-[900px] overflow-hidden flex flex-col bg-[#f3f5f6] ${CJK}`}>
      <div className="h-[3px] shrink-0 bg-[#c7ccd0]" />

      {/* title bar */}
      <div className="h-[39px] shrink-0 flex items-center pb-[6px] bg-gradient-to-b from-white to-[#f5f7f8]">
        <div className="ml-[16px] w-[16px] h-[16px] border border-[#333] bg-[#fff] p-[1px]">
          <div className="w-full h-full bg-[#148ccc] border-b-2 border-l-2 border-[#444]" />
        </div>
        <div className="ml-[5px] w-px h-[22px] bg-[#d5d8da]" />
        <div className="ml-[7px]">
          <Ico>
            <path d="M2 1h8l4 4v10H2z" fill="#fff" stroke="#9a9ea0" />
          </Ico>
        </div>
        <div className="ml-[6px]">
          <Ico>
            <path d="M1 5h5l1 2h7v7H1z" fill="#f2cf82" stroke="#b08b3e" />
            <path d="M9 4c1-2 3-3 5-3m-2-1l3 1-2 3" stroke="#333" strokeWidth="1.3" />
          </Ico>
        </div>
        <div className="ml-[10px]">
          <Ico>
            <path d="M1 1h12l2 2v12H1z" fill="#c6c9cb" />
            <rect x="4" y="2" width="8" height="5" fill="#f2f3f4" />
            <rect x="4" y="10" width="7" height="5" fill="#f2f3f4" />
          </Ico>
        </div>
        <div className="ml-[6px]">
          <Ico>
            <path d="M1 3h11v12H1z" fill="#c6c9cb" />
            <path d="M4 1h11v11" stroke="#c6c9cb" strokeWidth="2" />
            <rect x="4" y="10" width="5" height="5" fill="#f2f3f4" />
          </Ico>
        </div>
        <div className="ml-[9px]">
          <Ico>
            <path d="M1 6h8v9H1z" fill="#d0d3d5" />
            <path d="M6 1h8v8h-3" stroke="#c0c3c5" strokeWidth="2" />
            <rect x="3" y="11" width="4" height="4" fill="#f2f3f4" />
          </Ico>
        </div>
        <div className="ml-[7px]">
          <Ico>
            <path d="M5 6a6 5 0 1 1 1 7" stroke="#b1b5b8" strokeWidth="2" />
            <path d="M1 3l6 1-4 5z" fill="#b1b5b8" />
          </Ico>
        </div>
        <div className="ml-[5px] flex">
          <Caret light />
        </div>
        <div className="ml-[10px]">
          <Ico>
            <path d="M11 6a6 5 0 1 0-1 7" stroke="#b1b5b8" strokeWidth="2" />
            <path d="M15 3L9 4l4 5z" fill="#b1b5b8" />
          </Ico>
        </div>
        <div className="ml-[5px] flex">
          <Caret light />
        </div>
        <div className="ml-[9px]">
          <Ico>
            <path d="M1 2h3v3H1zM1 7h3v3H1zM1 12h3v3H1z" stroke="#1d5d75" />
            <path d="M6 8h9M6 11h9M6 14h9" stroke="#777" />
            <path d="M9 4h6M12 1v6" stroke="#14485c" strokeWidth="1.4" />
          </Ico>
        </div>
        <div className="ml-[9px]">
          <Ico>
            <rect x="1" y="5" width="10" height="10" fill="#fff" stroke="#555" />
            <rect x="5" y="1" width="10" height="8" fill="#fff" stroke="#1d5d75" />
            <path d="M5 1h10v2H5z" fill="#1d5d75" />
          </Ico>
        </div>
        <div className="ml-[6px] flex">
          <Caret />
        </div>
        <div className="ml-[10px]">
          <Ico s={12}>
            <path d="M1 2h7l3 3v5H4L1 7z" fill="#fff" stroke="#444" />
            <path d="M3 2l6 8M9 2l-6 8" stroke="#444" />
          </Ico>
        </div>
        <div className="ml-[7px] w-px h-[22px] bg-[#d5d8da]" />
        <div className="ml-[14px] flex">
          <Caret />
        </div>
        <div className={`ml-[9px] whitespace-pre text-[13px] tracking-[0.22px] font-bold text-[#b9bec1] ${MONO}`}>
          {"SSES_02 (活动的) C:\\Users\\Administrator.USER-20160301GS\\Desktop\\111\\5\\12\\sses_02.asm - PTC Creo Parametric"}
        </div>
        <div className="ml-auto mr-[14px] flex items-center gap-[15px]">
          <Ico s={12}>
            <path d="M2 8h8" stroke="#bfc3c6" strokeWidth="2" />
          </Ico>
          <Ico s={12}>
            <rect x="1" y="2" width="10" height="8" stroke="#bfc3c6" />
            <path d="M3 4h6" stroke="#bfc3c6" />
          </Ico>
          <Ico s={12}>
            <path d="M2 1l8 10M10 1L2 11" stroke="#bfc3c6" strokeWidth="2" />
          </Ico>
        </div>
      </div>

      {/* tabs */}
      <div className="h-[23px] shrink-0 flex items-end pl-[8px] relative z-10">
        <div className="w-[54px] h-[19px] flex items-center justify-center gap-[3px] bg-[#e9ebec] border-t border-r border-[#d2d5d7] font-bold text-[14px] text-[#74787b]">
          文件
          <Caret />
        </div>
        <div className="ml-[10px] w-[52px] h-[24px] -mb-px flex items-center justify-center bg-white border-t border-x border-[#c9cdcf] rounded-t-[2px] font-bold text-[14px] text-[#333]">
          模型
        </div>
        <Tab w="w-[53px]">分析</Tab>
        <Tab w="w-[53px]">注释</Tab>
        <Tab w="w-[53px]">渲染</Tab>
        <Tab w="w-[83px]">人体模型</Tab>
        <Tab w="w-[53px]">工具</Tab>
        <Tab w="w-[119px]" mono>
          MCADEx Tools
        </Tab>
        <Tab w="w-[53px]">视图</Tab>
        <Tab w="w-[83px]">应用程序</Tab>
        <Tab w="w-[53px]">框架</Tab>
        <div className="ml-auto mr-[12px] h-[20px] flex items-center">
          <Ico s={12}>
            <path d="M2 6l4-4 4 4M2 10l4-4 4 4" stroke="#555" strokeWidth="1.2" />
          </Ico>
          <div className="ml-[7px]">
            <Ico>
              <circle cx="9.500" cy="6.500" r="4.800" stroke="#222" strokeWidth="2" />
              <path d="M6 10l-4 5" stroke="#222" strokeWidth="2.400" />
            </Ico>
          </div>
          <div className="ml-[7px]">
            <Ico>
              <circle cx="8" cy="8" r="8" fill="#333" />
              <path d="M3 7l5-2 5 2-5 2z" fill="#fff" />
              <path d="M5 9v2c2 1 4 1 6 0V9" stroke="#fff" />
            </Ico>
          </div>
          <div className="ml-[6px] flex">
            <Caret light />
          </div>
          <div className="ml-[8px] w-[16px] h-[16px] rounded-full bg-[#2c2c2c] text-white text-[12px] font-bold leading-[16px] text-center">
            ?
          </div>
        </div>
      </div>

      {/* ribbon */}
      <div className="mx-[8px] shrink-0 flex border-t border-[#ccd0d2] bg-white">
        <Group w="w-[129px]" label="操作">
          <Big className="ml-[4px] w-[54px]" label={["重新生成"]} arrow>
            <RegenIcon />
          </Big>
          <div className="ml-[6px] pt-[3px]">
            <Row off icon={<CopyIcon />} label="复制" />
            <Row off icon={<PasteIcon />} label="粘贴" arrow />
            <Row off icon={<XIcon />} label="删除" arrow />
          </div>
        </Group>
        <Group w="w-[107px]" label="获取数据">
          <div className="ml-[8px] pt-[3px]">
            <Row icon={<UdfIcon />} label="用户定义特征" />
            <Row icon={<CopyGeomIcon />} label="复制几何" />
            <Row icon={<ShrinkIcon />} label="收缩包络" />
          </div>
        </Group>
        <Group w="w-[150px]" label="元件">
          <Big className="ml-[4px] w-[40px]" label={["组装"]} arrow>
            <AsmIcon />
          </Big>
          <div className="ml-[4px] pt-[3px]">
            <Row icon={<CreateIcon />} label="创建" />
            <Row off icon={<RepeatIcon />} label="重复" />
          </div>
          <div className="ml-[9px] mt-[8px] w-px h-[60px] bg-[#e6e8e9]" />
          <Big className="ml-[5px] w-[40px]" label={["拖动", "元件"]}>
            <DragIcon />
          </Big>
        </Group>
        <Group w="w-[151px]" label="基准">
          <Big className="ml-[6px] w-[36px]" label={["平面"]}>
            <PlaneIcon />
          </Big>
          <div className="ml-[6px] pt-[3px]">
            <Row icon={<AxisIcon />} label="轴" />
            <Row icon={<PointIcon />} label="点" arrow />
            <div className="h-[24.5px] flex items-center text-[12px] text-[#333] whitespace-nowrap">
              <div className="-ml-[1px]">
                <CsysIcon />
              </div>
              <span className="ml-[3px]">坐标系</span>
            </div>
          </div>
          <Big className="ml-[6px] w-[36px]" label={["草绘"]}>
            <SketchIcon />
          </Big>
        </Group>
        <Group w="w-[82px]" label="切口和曲面">
          <div className="ml-[19px] pt-[3px]">
            <Row icon={<HoleIcon />} label="孔" />
            <Row icon={<ExtrudeIcon />} label="拉伸" />
            <Row icon={<RevolveIcon />} label="旋转" />
          </div>
        </Group>
        <Group w="w-[58px]" label="修饰符">
          <Big className="ml-[8px] w-[40px]" label={["阵列"]} arrow>
            <PatternIcon />
          </Big>
        </Group>
        <Group w="w-[267px]" label="模型显示">
          <Big className="ml-[6px] w-[52px]" label={["管理视图"]} arrow>
            <ViewMgrIcon />
          </Big>
          <Big className="ml-[6px] w-[32px]" label={["截面"]} arrow>
            <SectionIcon />
          </Big>
          <Big className="ml-[5px] w-[40px]" label={["外观库"]} arrow>
            <SphereIcon />
          </Big>
          <div className="ml-[7px] w-[68px] pt-[3px]">
            <Row icon={<ExplodeIcon />} label="分解图" />
            <Row off icon={<ToggleStateIcon />} label="切换状况" />
            <Row icon={<EditPosIcon />} label="编辑位置" />
          </div>
          <Big className="ml-[6px] w-[40px]" label={["显示样", "式"]} inlineArrow>
            <StyleIcon />
          </Big>
        </Group>
        <Group w="w-[203px]" label="模型意图">
          <Big className="ml-[8px] w-[32px]" label={["元件", "界面"]}>
            <CompIfaceIcon />
          </Big>
          <Big className="ml-[7px] w-[32px]" label={["发布", "几何"]}>
            <PublishIcon />
          </Big>
          <Big className="ml-[9px] w-[32px]" label={["族表"]}>
            <FamilyIcon />
          </Big>
          <div className="ml-[5px] pt-[3px]">
            <div className="pl-[4px]">
              <Row pad={3} icon={<BracesIcon />} label="参数" />
              <Row pad={3} icon={<SwitchDimIcon />} label="切换尺寸" />
            </div>
            <div className="-mt-[1px] h-[24px] w-[51px] pl-[2px] pt-[1px] flex items-center gap-[3px] border-t-2 border-[#b5b8ba] bg-gradient-to-b from-[#e9eaeb] to-[#dcdedf] text-[12px] text-[#333] whitespace-nowrap">
              <span className="font-bold text-[14px] text-[#444]">d=</span>
              关系
            </div>
          </div>
        </Group>
        <Group w="w-[91px]" label="调查">
          <Big className="ml-[8px] w-[32px]" label={["物料", "清单"]}>
            <BomIcon />
          </Big>
          <Big className="ml-[6px] w-[38px]" label={["参考查", "看器"]}>
            <RefIcon />
          </Big>
        </Group>
        <div className="flex-1">
          <Group w="w-full border-r-0" />
        </div>
      </div>

      {/* viewport */}
      <div className="mx-[8px] h-[652px] shrink-0 relative bg-[linear-gradient(180deg,#46aaf7_0%,#70b9ee_31%,#aed0e2_71%,#e7e3d3_100%)]">
        <Model />
        <MiniToolbar />
        <div className="absolute right-0 top-0 w-[130px] h-[24px] bg-[#d5d8da] pl-[3px] pr-[4px] pt-[2px]">
          <div className="h-[22px] flex items-center bg-[#f2f3f4] text-[13px] font-bold text-[#b2b6b8]">
            <span className="ml-[27px]">菜单管理器</span>
            <span className="ml-auto mr-[6px] text-[17px] leading-[17px]">×</span>
          </div>
        </div>
      </div>

      {/* status bar */}
      <div className="h-[41px] shrink-0 flex items-center border-t-2 border-[#a0a299] border-b-[3px] border-b-[#cdd0d2] bg-[#eef0f1] pl-[10px]">
        <div className="w-[22px] h-[22px] flex items-center justify-center border border-[#d5d8da] bg-[#f3f4f5]">
          <Ico s={14}>
            <path d="M2 1h3v3H2zM2 6h3v3H2zM2 11h3v3H2zM9 6h3v3H9zM5 7.500h4M3.500 4v2M3.500 9v2" stroke="#444" />
          </Ico>
        </div>
        <div className="ml-[4px] w-[22px] h-[22px] flex items-center justify-center border border-[#d5d8da] bg-[#f3f4f5]">
          <Ico s={18}>
            <circle cx="9" cy="9" r="6.500" fill="#5aa9e0" stroke="#2a6f9f" />
            <ellipse cx="9" cy="9" rx="8.500" ry="3" transform="rotate(-35 9 9)" stroke="#444" />
          </Ico>
        </div>
        <Sep className="ml-[9px]" />
        <Sep className="ml-[912px]" />
        <div className="ml-[4px] w-[27px] flex items-center gap-[2px]">
          <span className="w-[10px] h-[10px] rounded-full bg-[#c4c6c8]" />
          <span className="w-[6px] h-[6px] rounded-full bg-[#d9dbdc]" />
          <span className="w-[6px] h-[6px] rounded-full bg-[#d9dbdc]" />
        </div>
        <Sep className="ml-[4px]" />
        <div className="ml-[5px]">
          <Ico s={13} h={16}>
            <path d="M1 0v16" stroke="#b0b3b5" strokeWidth="1.500" />
            <path d="M2 1l10 4-10 4z" fill="#c4c6c8" />
          </Ico>
        </div>
        <Sep className="ml-[22px]" />
        <div className="ml-[2px] w-[39px] h-[27px] flex items-center justify-center rounded-[2px] border border-[#c4c7c9] bg-[#f2f3f4]">
          <Ico s={18}>
            <path d="M4 2h3v4h4V2h3l1 4 2 9-1 1h-5l-1-1V9H8v6l-1 1H2l-1-1 2-9z" fill="#333" />
          </Ico>
        </div>
        <div className="ml-[7px] w-[39px] h-[27px] flex items-center justify-center rounded-[2px] border border-[#dcdee0] bg-[#eef0f1]">
          <Ico s={18}>
            <path d="M1 5l4-4h12v12l-4 4H1z" stroke="#a9acae" />
            <path d="M1 5h12v12M13 5l4-4" stroke="#a9acae" />
            <rect x="5" y="8" width="5" height="6" stroke="#a9acae" />
          </Ico>
        </div>
        <div className="ml-[97px] w-[176px] h-[19px] flex border border-[#c9cccf] bg-white">
          <span className="flex-1 pl-[7px] text-[12px] leading-[17px] text-[#444]">全部</span>
          <span className="w-[14px] flex items-center justify-center border-l border-[#d2d4d6] bg-[#f1f2f3]">
            <Caret />
          </span>
        </div>
      </div>

      <Taskbar />

      {/* dialog + side decoration */}
      <Dialog />
      <div className="absolute left-[1433px] top-[277px] w-[8px] h-[66px] rounded-[2px] border-y-[5px] border-[#d9a520] bg-[repeating-linear-gradient(180deg,#5a3a1a_0px,#5a3a1a_2px,#c9b060_2px,#c9b060_3px)]" />
    </div>
  );
}
